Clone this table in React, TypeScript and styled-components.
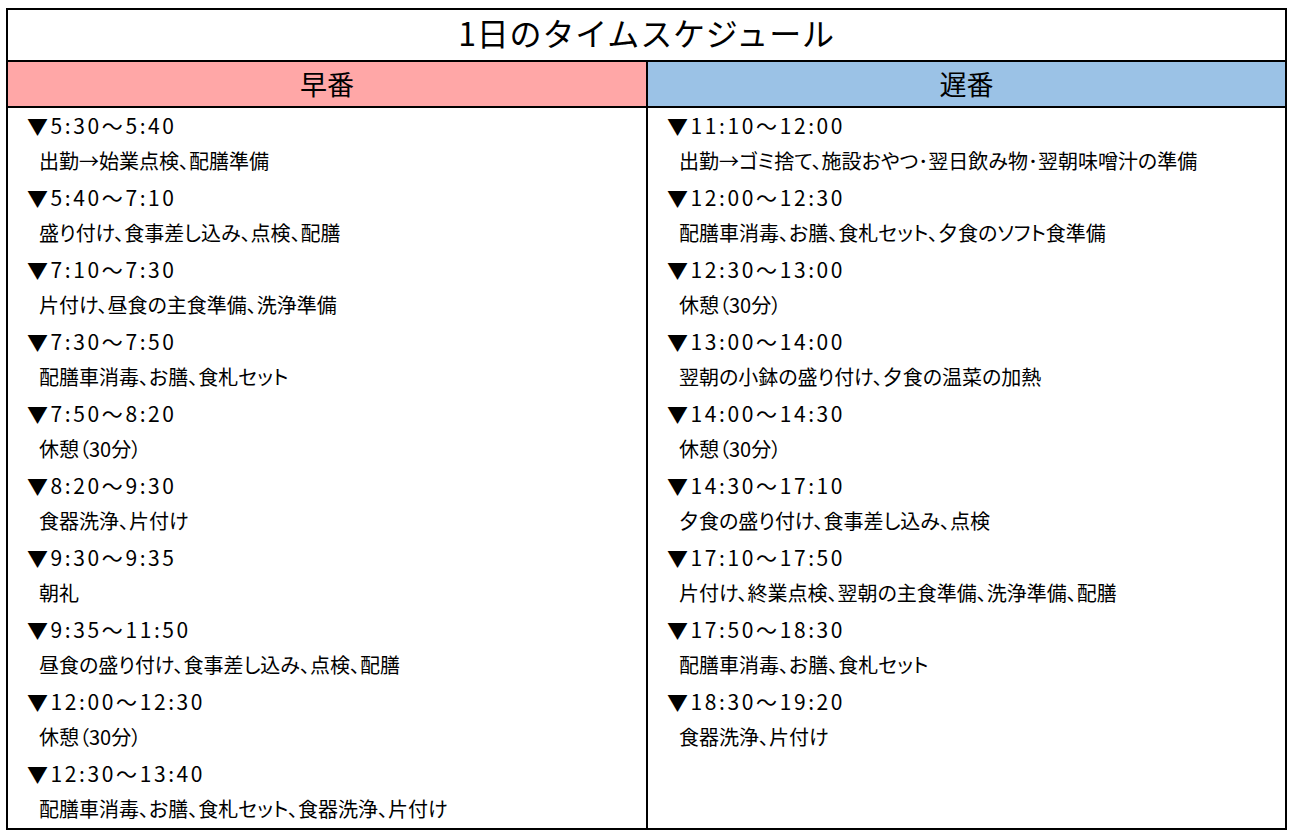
import styled, { createGlobalStyle } from "styled-components";

const GlobalStyle = createGlobalStyle`
  html, body {
    margin: 0;
    padding: 0;
    background: #ffffff;
  }
  body {
    padding: 8px 0 0 6px;
    font-family: "Noto Sans CJK JP", "Noto Sans", sans-serif;
    color: #000000;
  }
`;

const Sheet = styled.div`
  width: 1281px;
  box-sizing: border-box;
  border: 2px solid #000;
`;

const Title = styled.div`
  height: 50px;
  box-sizing: border-box;
  padding-bottom: 7px;
  border-bottom: 2px solid #000;
  display: flex;
  align-items: center;
  justify-content: center;
  font-size: 32px;
  letter-spacing: 0.8px;
  line-height: 1;
  box-sizing: content-box;
  height: 43px;
`;

const Columns = styled.div`
  display: grid;
  grid-template-columns: 640px 1fr;
`;

const Column = styled.div<{ $last?: boolean }>`
  display: flex;
  flex-direction: column;
  border-right: ${(p) => (p.$last ? "none" : "2px solid #000")};
`;

const Header = styled.div<{ $bg: string }>`
  height: 44px;
  background: ${(p) => p.$bg};
  border-bottom: 2px solid #000;
  display: flex;
  align-items: center;
  justify-content: center;
  font-size: 27px;
  line-height: 1;
  padding-bottom: 2px;
  box-sizing: border-box;
  height: 46px;
`;

const List = styled.div`
  display: flex;
  flex-direction: column;
  height: 720px;
`;

const Time = styled.div`
  height: 36px;
  line-height: 34px;
  padding-left: 19px;
  font-size: 21px;
  letter-spacing: 2.6px;
  white-space: nowrap;
`;

const Task = styled.div`
  height: 36px;
  line-height: 34px;
  padding-left: 31px;
  font-size: 20px;
  font-feature-settings: "palt";
  white-space: nowrap;
`;

type Slot = { time: string; task: string };

const early: Slot[] = [
  { time: "5:30～5:40", task: "出勤→始業点検、配膳準備" },
  { time: "5:40～7:10", task: "盛り付け、食事差し込み、点検、配膳" },
  { time: "7:10～7:30", task: "片付け、昼食の主食準備、洗浄準備" },
  { time: "7:30～7:50", task: "配膳車消毒、お膳、食札セット" },
  { time: "7:50～8:20", task: "休憩（30分）" },
  { time: "8:20～9:30", task: "食器洗浄、片付け" },
  { time: "9:30～9:35", task: "朝礼" },
  { time: "9:35～11:50", task: "昼食の盛り付け、食事差し込み、点検、配膳" },
  { time: "12:00～12:30", task: "休憩（30分）" },
  { time: "12:30～13:40", task: "配膳車消毒、お膳、食札セット、食器洗浄、片付け" },
];

const late: Slot[] = [
  { time: "11:10～12:00", task: "出勤→ゴミ捨て、施設おやつ･翌日飲み物･翌朝味噌汁の準備" },
  { time: "12:00～12:30", task: "配膳車消毒、お膳、食札セット、夕食のソフト食準備" },
  { time: "12:30～13:00", task: "休憩（30分）" },
  { time: "13:00～14:00", task: "翌朝の小鉢の盛り付け、夕食の温菜の加熱" },
  { time: "14:00～14:30", task: "休憩（30分）" },
  { time: "14:30～17:10", task: "夕食の盛り付け、食事差し込み、点検" },
  { time: "17:10～17:50", task: "片付け、終業点検、翌朝の主食準備、洗浄準備、配膳" },
  { time: "17:50～18:30", task: "配膳車消毒、お膳、食札セット" },
  { time: "18:30～19:20", task: "食器洗浄、片付け" },
];

function Shift({ title, bg, slots, last }: { title: string; bg: string; slots: Slot[]; last?: boolean }) {
  return (
    <Column $last={last}>
      <Header $bg={bg}>{title}</Header>
      <List>
        {slots.map((s) => (
          <div key={s.time}>
            <Time>▼{s.time}</Time>
            <Task>{s.task}</Task>
          </div>
        ))}
      </List>
    </Column>
  );
}

export default function App() {
  return (
    <>
      <GlobalStyle />
      <Sheet>
        <Title>1日のタイムスケジュール</Title>
        <Columns>
          <Shift title="早番" bg="#ffa7a7" slots={early} />
          <Shift title="遅番" bg="#9bc2e6" slots={late} last />
        </Columns>
      </Sheet>
    </>
  );
}
